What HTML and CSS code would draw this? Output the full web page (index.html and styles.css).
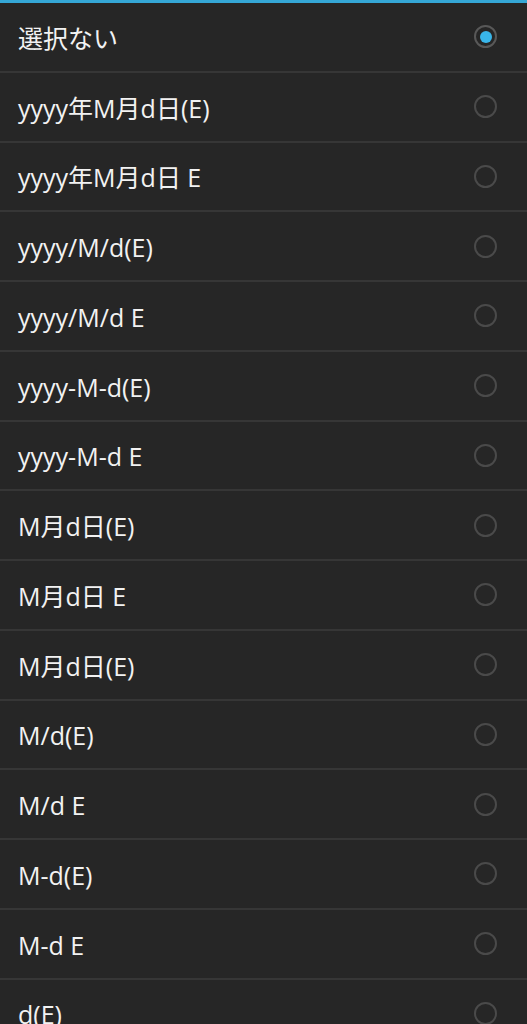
FILE: index.html
```html
<!DOCTYPE html>
<html lang="ja">

<head>
    <meta charset="UTF-8">
    <meta name="viewport" content="width=device-width, initial-scale=1.0">
    <title>日付形式</title>
    <link rel="stylesheet" href="styles.css">
</head>

<body>
    <div id="top-bar"></div>
    <ul id="format-list">
        <li class="option selected"><span class="label">選択ない</span><span class="radio"></span></li>
        <li class="option"><span class="label">yyyy年M月d日(E)</span><span class="radio"></span></li>
        <li class="option"><span class="label">yyyy年M月d日 E</span><span class="radio"></span></li>
        <li class="option"><span class="label">yyyy/M/d(E)</span><span class="radio"></span></li>
        <li class="option"><span class="label">yyyy/M/d E</span><span class="radio"></span></li>
        <li class="option"><span class="label">yyyy-M-d(E)</span><span class="radio"></span></li>
        <li class="option"><span class="label">yyyy-M-d E</span><span class="radio"></span></li>
        <li class="option"><span class="label">M月d日(E)</span><span class="radio"></span></li>
        <li class="option"><span class="label">M月d日 E</span><span class="radio"></span></li>
        <li class="option"><span class="label">M月d日(E)</span><span class="radio"></span></li>
        <li class="option"><span class="label">M/d(E)</span><span class="radio"></span></li>
        <li class="option"><span class="label">M/d E</span><span class="radio"></span></li>
        <li class="option"><span class="label">M-d(E)</span><span class="radio"></span></li>
        <li class="option"><span class="label">M-d E</span><span class="radio"></span></li>
        <li class="option"><span class="label">d(E)</span><span class="radio"></span></li>
    </ul>
</body>

</html>
```

FILE: styles.css
```css
body {
    font-family: 'Open Sans', 'Noto Sans CJK JP', sans-serif;
    margin: 0;
    padding: 0;
    background-color: #262626;
    height: 1024px;
    overflow: hidden;
}

#top-bar {
    height: 3px;
    background-color: #35a7d6;
}

#format-list {
    list-style: none;
    margin: 0;
    padding: 0;
}

.option {
    box-sizing: border-box;
    height: 69.75px;
    display: flex;
    align-items: center;
    justify-content: space-between;
    padding: 0 30px 0 18px;
    border-bottom: 2px solid #363636;
}

.label {
    color: #f2f2f2;
    font-size: 25px;
    line-height: 1.2;
    padding-top: 2px;
}

.radio {
    box-sizing: border-box;
    width: 23px;
    height: 23px;
    border-radius: 50%;
    border: 2px solid #4a4a4a;
    display: flex;
    align-items: center;
    justify-content: center;
}

.selected .radio {
    border-color: #585858;
}

.selected .radio::after {
    content: '';
    width: 12px;
    height: 12px;
    border-radius: 50%;
    background-color: #39b6ea;
}
```
